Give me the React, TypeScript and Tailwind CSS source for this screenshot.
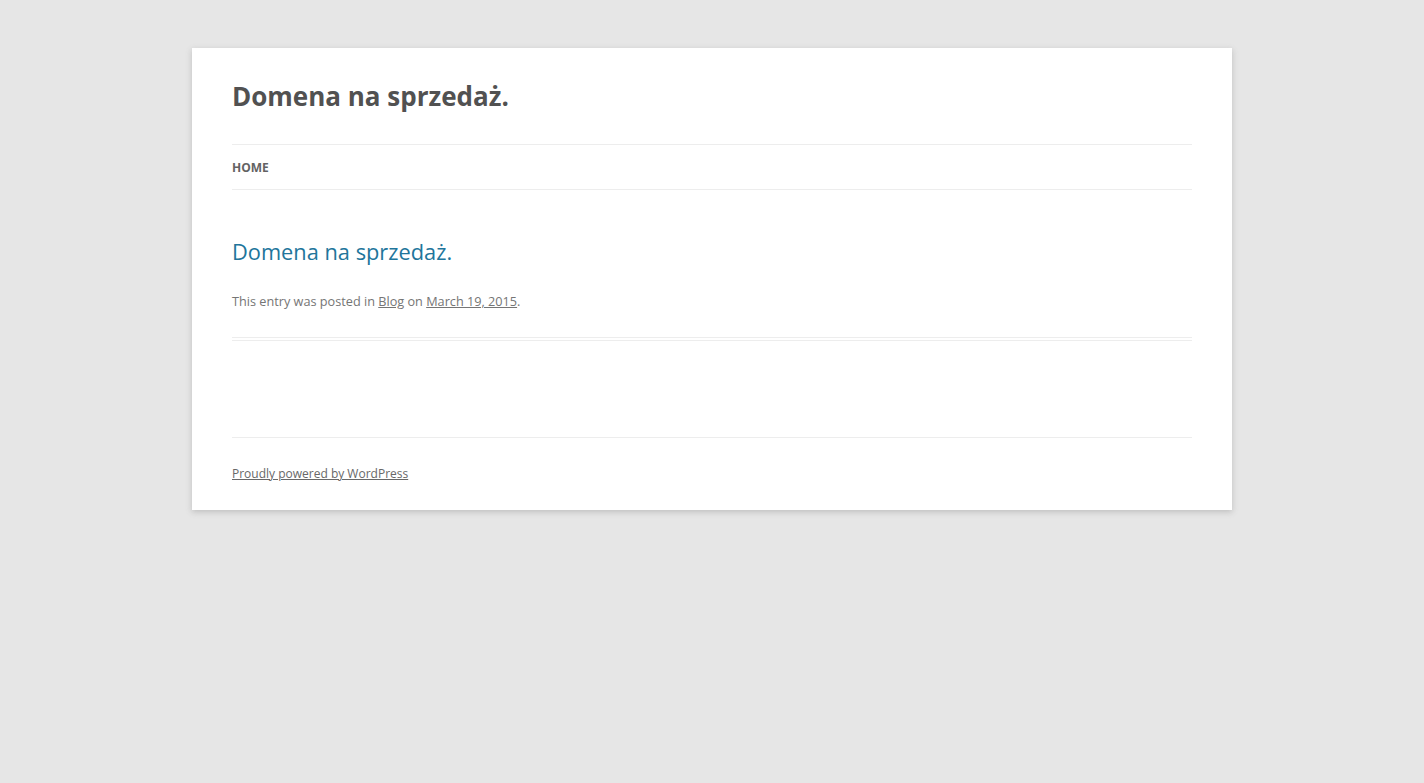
export default function App() {
  return (
    <div className="min-h-[783px] bg-[#e6e6e6] pt-12 pb-12 font-['Open_Sans',sans-serif]">
      <div className="mx-auto w-[1040px] bg-white px-10 shadow-[0_2px_6px_rgba(100,100,100,0.3)]">
        <header className="pt-6 pb-6">
          <h1 className="text-[26px] leading-[48px] font-bold text-[#515151]">
            <a href="#">Domena na sprzedaż.</a>
          </h1>
          <nav className="mt-6 border-y border-[#ededed]">
            <ul className="flex">
              <li>
                <a href="#" className="block pt-px text-[12px] leading-[43px] font-bold uppercase text-[#636363]">
                  Home
                </a>
              </li>
            </ul>
          </nav>
        </header>

        <main className="mt-6">
          <article className="mb-[96px] border-b-4 border-double border-[#ededed] pb-6">
            <header className="mb-6">
              <h1 className="text-[21.8px] leading-[27px] text-[#21759b]">
                <a href="#">Domena na sprzedaż.</a>
              </h1>
            </header>
            <footer className="text-[12.7px] leading-[24px] text-[#757575]">
              This entry was posted in{" "}
              <a href="#" className="underline">Blog</a> on{" "}
              <a href="#" className="underline">March 19, 2015</a>.
            </footer>
          </article>
        </main>

        <footer className="border-t border-[#ededed] py-6 text-[12px] leading-[24px] text-[#686868]">
          <a href="#" className="underline">Proudly powered by WordPress</a>
        </footer>
      </div>
    </div>
  );
}
